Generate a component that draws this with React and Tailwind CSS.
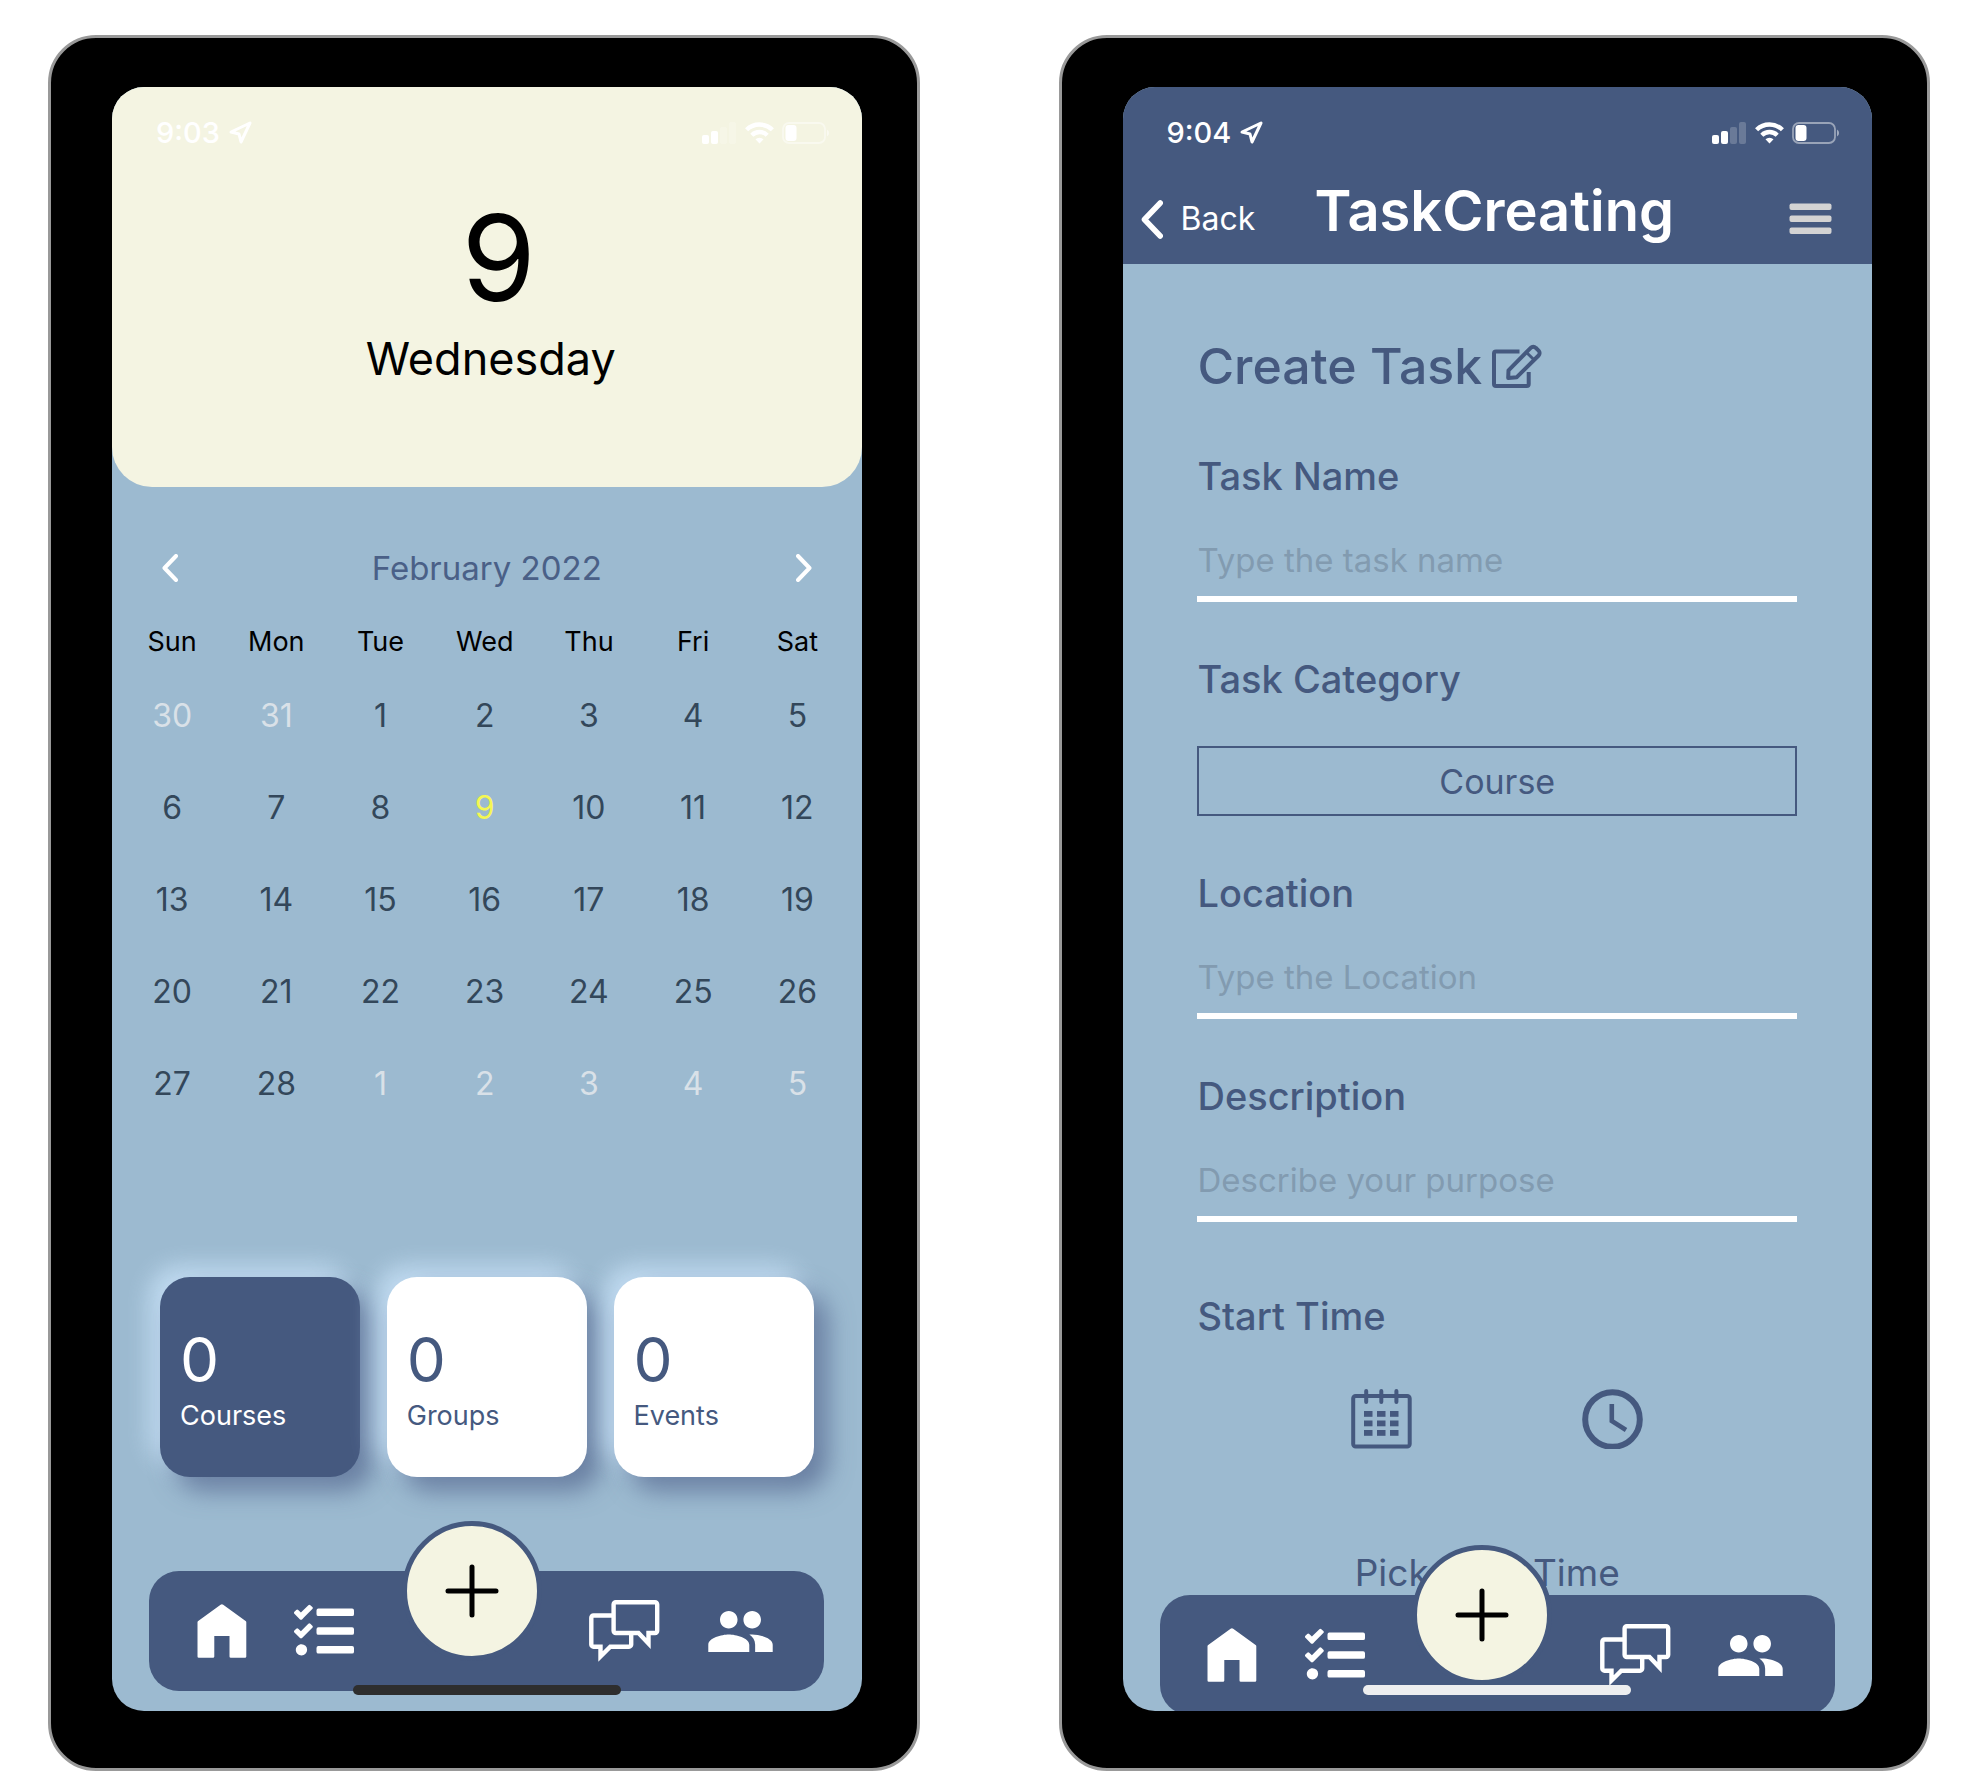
import React from "react";
import { Navigation } from "lucide-react";
import { FaTasks } from "react-icons/fa";

function StatusBar({ time }) {
  return (
    <div className="flex h-[92px] items-center justify-between pr-8 pl-11 text-white">
      <div className="flex items-center gap-2">
        <span className="text-[29px] leading-8 font-medium">{time}</span>
        <Navigation size={24} strokeWidth={3} />
      </div>
      <div className="flex items-center gap-2">
        <svg width="35" height="22" viewBox="0 0 35 22" fill="currentColor">
          <rect x="0" y="13" width="7" height="9" rx="2" />
          <rect x="9" y="9" width="7" height="13" rx="2" />
          <rect x="18" y="5" width="7" height="17" rx="2" opacity="0.2" />
          <rect x="27" y="0" width="7" height="22" rx="2" opacity="0.2" />
        </svg>
        <svg width="29" height="22" viewBox="0 0 29 22" fill="none" stroke="currentColor" strokeWidth="4.4">
          <path d="M1.6 7.8a18.4 18.4 0 0 1 25.8 0" />
          <path d="M6.8 13.2a11 11 0 0 1 15.4 0" />
          <path d="M14.5 21.5l-4-4.2a5.8 5.8 0 0 1 8 0z" fill="currentColor" stroke="none" />
        </svg>
        <svg width="48" height="22" viewBox="0 0 48 22" fill="currentColor">
          <rect x="1" y="1" width="42" height="20" rx="6" fill="none" stroke="currentColor" strokeWidth="1.8" opacity="0.45" />
          <rect x="3.5" y="3" width="11" height="16" rx="3" />
          <path d="M45 7.5a4 4 0 0 1 0 7z" opacity="0.5" />
        </svg>
      </div>
    </div>
  );
}

function ChevronLeft({ className, strokeWidth }) {
  return (
    <svg className={className} viewBox="0 0 16 28" fill="none" stroke="currentColor" strokeWidth={strokeWidth} strokeLinecap="round" strokeLinejoin="round">
      <path d="M14 2L2.5 14L14 26" />
    </svg>
  );
}

function ChevronRight({ className, strokeWidth }) {
  return (
    <svg className={className} viewBox="0 0 16 28" fill="none" stroke="currentColor" strokeWidth={strokeWidth} strokeLinecap="round" strokeLinejoin="round">
      <path d="M2 2L13.5 14L2 26" />
    </svg>
  );
}

function HomeIcon() {
  return (
    <svg width="50" height="54" viewBox="0 0 50 54" fill="currentColor">
      <path d="M23.6 0.7a2 2 0 0 1 2.6 0L48.6 17a1.6 1.6 0 0 1 .7 1.3V52.4a1.3 1.3 0 0 1-1.3 1.3H33.8a1.3 1.3 0 0 1-1.3-1.3V32H17.3v20.4a1.3 1.3 0 0 1-1.3 1.3H1.8A1.3 1.3 0 0 1 .5 52.4V18.3A1.6 1.6 0 0 1 1.200 17z" />
    </svg>
  );
}

function ChatIcon() {
  return (
    <svg width="71" height="62" viewBox="0 0 71 62" fill="none" stroke="currentColor" strokeWidth="4.4">
      <path d="M24 15.500H4.500a2.200 2.200 0 0 0-2.200 2.200V44.500a2.200 2.200 0 0 0 2.200 2.200H11.500V56.500L21.300 46.700H40a2.200 2.200 0 0 0 2.200-2.200V35" />
      <path d="M26.800 2.200H66a2.200 2.200 0 0 1 2.200 2.200V30.800a2.200 2.200 0 0 1-2.200 2.200H59.500V43.500L49.500 33H26.800a2.200 2.200 0 0 1-2.200-2.200V4.400A2.200 2.200 0 0 1 26.800 2.200z" />
    </svg>
  );
}

function PeopleIcon() {
  return (
    <svg width="65" height="41" viewBox="1 5 22 14" fill="currentColor">
      <path d="M16 11c1.660 0 2.990-1.340 2.990-3S17.660 5 16 5c-1.660 0-3 1.340-3 3s1.340 3 3 3zm-8 0c1.660 0 2.990-1.340 2.990-3S9.660 5 8 5C6.340 5 5 6.340 5 8s1.340 3 3 3zm0 2c-2.330 0-7 1.170-7 3.500V19h14v-2.500c0-2.330-4.670-3.500-7-3.500zm8 0c-.29 0-.62.020-.97.050 1.160.84 1.970 1.970 1.970 3.450V19h6v-2.500c0-2.330-4.670-3.500-7-3.500z" />
    </svg>
  );
}

function NavBar() {
  return (
    <nav className="mx-auto flex h-[120px] w-9/10 items-center justify-evenly rounded-[30px] bg-[#45597f] pr-1 text-white">
      <button aria-label="Home"><HomeIcon /></button>
      <button aria-label="Tasks"><FaTasks size={60} /></button>
      <button aria-label="Add" className="-mt-20 flex size-[140px] shrink-0 items-center justify-center rounded-full border-5 border-[#45597f] bg-[#f4f4e2] text-black">
        <svg width="54" height="54" viewBox="0 0 54 54" stroke="currentColor" strokeWidth="5" strokeLinecap="round">
          <path d="M27 3v48M3 27h48" />
        </svg>
      </button>
      <button aria-label="Messages"><ChatIcon /></button>
      <button aria-label="People"><PeopleIcon /></button>
    </nav>
  );
}

function Phone({ children, indicator }) {
  return (
    <section className="rounded-[48px] border-3 border-[#999999] bg-black pt-[49px] pr-[55px] pb-[57px] pl-[61px]">
      <div className="relative flex h-full flex-col overflow-hidden rounded-[32px] bg-[#9cbad0]">
        {children}
        <div className={`absolute bottom-4 left-1/2 h-2.5 w-[268px] -translate-x-1/2 rounded-full ${indicator}`} />
      </div>
    </section>
  );
}

const DAYS = ["Sun", "Mon", "Tue", "Wed", "Thu", "Fri", "Sat"];

const WEEKS = [
  [30, 31, 1, 2, 3, 4, 5],
  [6, 7, 8, 9, 10, 11, 12],
  [13, 14, 15, 16, 17, 18, 19],
  [20, 21, 22, 23, 24, 25, 26],
  [27, 28, 1, 2, 3, 4, 5],
];

function dayColor(week, day) {
  if ((week === 0 && day > 20) || (week === 4 && day < 20)) return "text-[#d9e1e8]";
  if (week === 1 && day === 9) return "text-[#f4f752]";
  return "text-[#33475a]";
}

function Calendar() {
  return (
    <div className="mt-[61px]">
      <div className="flex h-10 items-center justify-between px-[50px]">
        <button aria-label="Previous month" className="text-white"><ChevronLeft className="h-7 w-4" strokeWidth={4} /></button>
        <h2 className="text-[33px] leading-10 text-[#4a6087]">February 2022</h2>
        <button aria-label="Next month" className="text-white"><ChevronRight className="h-7 w-4" strokeWidth={4} /></button>
      </div>
      <div className="mt-[26px] pr-3 pl-2">
        <table className="w-full table-fixed text-center">
          <thead>
            <tr className="h-14">
              {DAYS.map((d) => (
                <th key={d} className="p-0 text-[27px] leading-8 font-normal text-black">{d}</th>
              ))}
            </tr>
          </thead>
          <tbody>
            {WEEKS.map((week, w) => (
              <tr key={w} className="h-[92px]">
                {week.map((day, i) => (
                  <td key={i} className="p-0">
                    <button className={`text-[32px] leading-10 ${dayColor(w, day)}`}>{day}</button>
                  </td>
                ))}
              </tr>
            ))}
          </tbody>
        </table>
      </div>
    </div>
  );
}

function StatCard({ label, className }) {
  return (
    <button className={`flex size-[200px] flex-col items-start justify-center rounded-[30px] px-5 pt-1.5 text-left shadow-[14px_14px_24px_#5d7196cc,-10px_-10px_24px_#cbe5fadd] ${className}`}>
      <span className="text-[62px] leading-[64px]">0</span>
      <span className="mt-2 text-[27px] leading-8">{label}</span>
    </button>
  );
}

function HomeScreen() {
  return (
    <Phone indicator="bg-[#2e2e2e]">
      <header className="rounded-b-[40px] bg-[#f4f4e2] pb-[104px] text-center">
        <StatusBar time="9:03" />
        <p className="mt-[19px] pl-6 text-[120px] leading-[120px] text-black">9</p>
        <p className="mt-[17px] pl-2 text-[45px] leading-[48px] text-black">Wednesday</p>
      </header>
      <Calendar />
      <div className="mt-[147px] flex justify-between px-12">
        <StatCard label="Courses" className="bg-[#45597f] text-white" />
        <StatCard label="Groups" className="bg-white text-[#45597f]" />
        <StatCard label="Events" className="bg-white text-[#45597f]" />
      </div>
      <div className="relative mt-[94px] pb-5">
        <NavBar />
      </div>
    </Phone>
  );
}

function Label({ htmlFor, children }) {
  return <label htmlFor={htmlFor} className="block text-[38px] leading-10 font-medium">{children}</label>;
}

function TextField({ id, label, placeholder }) {
  return (
    <div>
      <Label htmlFor={id}>{label}</Label>
      <input id={id} type="text" placeholder={placeholder} className="mt-7 block h-[78px] w-full border-b-6 border-white bg-transparent text-[33px] outline-none placeholder:text-[#829bb0]" />
    </div>
  );
}

function EditIcon() {
  return (
    <svg width="50" height="45" viewBox="0 0 50 45" fill="none" stroke="currentColor" strokeWidth="4" strokeLinejoin="round">
      <path d="M27.500 7.500H4a2 2 0 0 0-2 2V40a2 2 0 0 0 2 2H34.700a2 2 0 0 0 2-2V28" />
      <path d="M16.200 33.900L16.500 26.300L38.700 3.800a3.500 3.500 0 0 1 5 0L46.600 6.600a3.500 3.500 0 0 1 0 4.900L24.800 33.200z" />
      <path d="M34.500 8.500L42 15.800" strokeWidth="3" />
    </svg>
  );
}

function CalendarIcon() {
  const columns = [13, 26, 39];
  const rows = [22, 31.500, 41];
  return (
    <svg width="61" height="60" viewBox="0 0 61 60" fill="none" stroke="currentColor" strokeWidth="4">
      <rect x="2.200" y="7" width="56.500" height="50.500" rx="2.500" />
      <path d="M15.200 2v11M30.300 2v11M45.400 2v11" strokeLinecap="round" />
      {rows.map((y) => columns.map((x) => (
        <rect key={`${x}-${y}`} x={x} y={y} width="8.500" height="5.800" fill="currentColor" stroke="none" />
      )))}
    </svg>
  );
}

function ClockIcon() {
  return (
    <svg width="61" height="60" viewBox="0 0 61 60" fill="none" stroke="currentColor">
      <circle cx="30.500" cy="30.500" r="27.300" strokeWidth="6" />
      <path d="M29.800 15V32L44 41" strokeWidth="4.600" />
    </svg>
  );
}

function TaskScreen() {
  return (
    <Phone indicator="bg-[#edeeef]">
      <header className="bg-[#45597f] pb-[5px] text-white">
        <StatusBar time="9:04" />
        <div className="grid h-20 grid-cols-[1fr_auto_1fr] items-center pr-6 pl-[18px]">
          <button className="flex items-center gap-[18px] justify-self-start text-[32px] leading-10">
            <ChevronLeft className="h-[39px] w-[22px]" strokeWidth={4} />
            Back
          </button>
          <h1 className="pb-4 text-[56px] leading-[64px] font-semibold">TaskCreating</h1>
          <button aria-label="Menu" className="justify-self-end px-4 text-[#d3d3d3]">
            <svg width="43" height="32" viewBox="0 0 43 32" fill="currentColor">
              <rect x="0.500" y="0.500" width="42" height="6.500" rx="2" />
              <rect x="0.500" y="12.500" width="42" height="6.500" rx="2" />
              <rect x="0.500" y="24.500" width="42" height="6.500" rx="2" />
            </svg>
          </button>
        </div>
      </header>
      <form className="mx-auto w-4/5 pb-[114px] text-[#45597f]">
        <div className="mt-[78px] flex h-12 items-center gap-2.5">
          <h2 className="text-[50px] leading-[48px] font-medium">Create Task</h2>
          <EditIcon />
        </div>
        <div className="mt-[66px] flex flex-col gap-[57px]">
          <TextField id="task-name" label="Task Name" placeholder="Type the task name" />
          <div>
            <Label htmlFor="category">Task Category</Label>
            <select id="category" className="mt-[47px] block h-[70px] w-full appearance-none border-2 border-[#45597f] bg-transparent text-[34px] [text-align-last:center]">
              <option>Course</option>
            </select>
          </div>
          <TextField id="location" label="Location" placeholder="Type the Location" />
          <TextField id="description" label="Description" placeholder="Describe your purpose" />
        </div>
        <h3 className="mt-[74px] text-[38px] leading-10 font-medium">Start Time</h3>
        <div className="mt-[53px] flex justify-center gap-[170px]">
          <button type="button" aria-label="Pick date"><CalendarIcon /></button>
          <button type="button" aria-label="Pick time"><ClockIcon /></button>
        </div>
        <p className="mt-[100px] pr-5 text-center text-[37px] leading-[48px]">Pick Start Time</p>
      </form>
      <div className="absolute inset-x-0 -bottom-1">
        <NavBar />
      </div>
    </Phone>
  );
}

export default function App() {
  return (
    <main className="grid min-h-screen grid-cols-2 items-start gap-[139px] bg-white pt-[35px] pr-[54px] pb-5 pl-12 font-['Inter','Liberation_Sans',sans-serif]">
      <HomeScreen />
      <TaskScreen />
    </main>
  );
}
